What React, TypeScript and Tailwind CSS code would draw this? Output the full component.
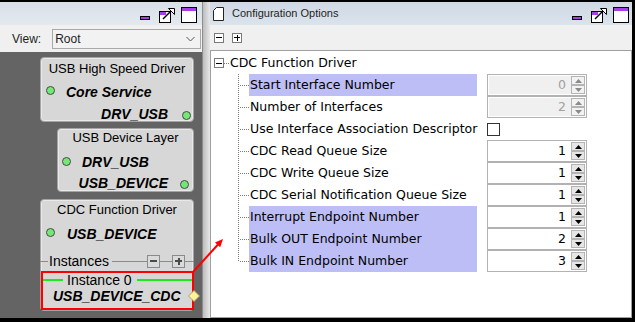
import React from 'react';

const SANS = "font-['Liberation_Sans',Arial,sans-serif]";
const TREE = "font-['DejaVu_Sans',Verdana,sans-serif]";

const WindowButtons = () => (
  <svg width="58" height="17" viewBox="0 0 58 17">
    <rect x="0.5" y="9.5" width="9" height="3" fill="#a53ee6" stroke="#000" />
    <g transform="translate(19,0)">
      <rect x="0.5" y="4.5" width="11" height="11" fill="#fff" stroke="#000" />
      <rect x="1" y="5" width="6" height="3" fill="#a53ee6" />
      <path d="M4 12 L12 4" stroke="#000" strokeWidth="1.5" />
      <path d="M9.5 1.5 L15.5 1.5 L15.5 7.5 Z" fill="#fff" stroke="#000" />
    </g>
    <g transform="translate(41,0)">
      <rect x="0.5" y="0.5" width="15" height="15" fill="#fff" stroke="#000" />
      <rect x="1" y="1" width="14" height="3" fill="#a53ee6" />
    </g>
  </svg>
);

const Dot = () => (
  <span className="inline-block h-[9px] w-[9px] shrink-0 rounded-full border border-[#4a4a4a] bg-[#74e874]" />
);

const NodeLabel = ({ children }: { children: React.ReactNode }) => (
  <span className={`${SANS} text-[14px] font-bold italic leading-none text-black`}>{children}</span>
);

const nodeBox = 'flex flex-col rounded-[4px] border border-[#a4a4a4] bg-[#d7d7d7] shadow-[inset_0_0_0_1px_#e9e9e9]';

const SmallBtn = ({ plus }: { plus?: boolean }) => (
  <span className="relative flex h-[13px] w-[13px] shrink-0 items-center justify-center border border-[#8a8a8a] bg-[#dadada]">
    <span className="h-[2px] w-[7px] bg-[#4a4a4a]" />
    {plus && <span className="absolute h-[7px] w-[2px] bg-[#4a4a4a]" />}
  </span>
);

const ToolBtn = ({ plus }: { plus?: boolean }) => (
  <span className="relative flex h-[10px] w-[10px] shrink-0 items-center justify-center border border-[#7a7a7a] bg-white">
    <span className="h-[1px] w-[6px] bg-black" />
    {plus && <span className="absolute h-[6px] w-[1px] bg-black" />}
  </span>
);

const Canvas = () => (
  <div className="relative flex flex-1 flex-col bg-[#646464]">
    {/* USB High Speed Driver */}
    <div className={`${nodeBox} ml-[40px] mt-[5px] h-[65px] w-[154px]`}>
      <div className={`${SANS} flex h-[21px] shrink-0 items-center justify-center text-[13px] text-black`}>USB High Speed Driver</div>
      <div className="flex h-[23px] shrink-0 items-center pl-[5px]">
        <Dot />
        <span className="ml-[11px]"><NodeLabel>Core Service</NodeLabel></span>
      </div>
      <div className="flex h-[24px] shrink-0 items-center justify-end pr-[2px]">
        <NodeLabel>DRV_USB</NodeLabel>
        <span className="ml-[14px]"><Dot /></span>
      </div>
    </div>

    {/* USB Device Layer */}
    <div className={`${nodeBox} ml-[57px] mt-[6px] h-[64px] w-[137px]`}>
      <div className={`${SANS} flex h-[18px] items-center justify-center text-[13px] text-black`}>USB Device Layer</div>
      <div className="flex h-[28px] items-center pl-[4px]">
        <Dot />
        <span className="ml-[11px]"><NodeLabel>DRV_USB</NodeLabel></span>
      </div>
      <div className="flex h-[16px] items-center justify-end pr-[4px]">
        <NodeLabel>USB_DEVICE</NodeLabel>
        <span className="ml-[12px]"><Dot /></span>
      </div>
    </div>

    {/* CDC Function Driver */}
    <div className={`${nodeBox} ml-[40px] mt-[7px] h-[112px] w-[154px]`}>
      <div className={`${SANS} flex h-[20px] items-center justify-center text-[13px] text-black`}>CDC Function Driver</div>
      <div className="flex h-[26px] items-center pl-[5px]">
        <Dot />
        <span className="ml-[12px]"><NodeLabel>USB_DEVICE</NodeLabel></span>
      </div>
      <div className="-mx-[1px] flex h-[26px] items-center pt-[6px]">
        <span className="h-[1px] w-[8px] bg-[#8a8a8a]" />
        <span className={`${SANS} ml-[1px] text-[14px] leading-none text-black`}>Instances</span>
        <span className="ml-[3px] h-[1px] flex-1 bg-[#8a8a8a]" />
        <SmallBtn />
        <span className="h-[1px] w-[12px] bg-[#8a8a8a]" />
        <SmallBtn plus />
        <span className="h-[1px] w-[9px] bg-[#8a8a8a]" />
      </div>
      <div className="relative flex h-[39px] w-[153px] flex-col border-2 border-[#ff0000]">
        <div className="flex h-[14px] items-center">
          <span className="h-[2px] w-[20px] bg-[#1ee81e]" />
          <span className={`${SANS} ml-[4px] text-[14px] leading-none text-black`}>Instance 0</span>
          <span className="ml-[5px] h-[2px] flex-1 bg-[#1ee81e]" />
        </div>
        <div className="flex h-[18px] items-center pl-[10px]">
          <NodeLabel>USB_DEVICE_CDC</NodeLabel>
        </div>
        <svg className="absolute left-[145px] top-[17px]" width="12" height="12" viewBox="0 0 12 12">
          <polygon points="6,0.5 11.5,6 6,11.5 0.5,6" fill="#fff39a" stroke="#a8a070" />
        </svg>
      </div>
    </div>
  </div>
);

const LeftPanel = () => (
  <div className="flex w-[202px] shrink-0 flex-col">
    <div className="flex h-[23px] items-start justify-end bg-linear-to-b from-[#d8e0e9] to-[#e4e9ef] pr-[4px] pt-[5px]">
      <WindowButtons />
    </div>
    <div className={`${SANS} flex h-[27px] items-center bg-[#f0f0f0] pl-[12px] text-[12px] text-[#1e1e1e]`}>
      <span>View:</span>
      <div className="ml-[11px] flex h-[20px] w-[149px] items-center justify-between border border-[#a9a9a9] bg-[#f2f2f2] pl-[2px] pr-[5px]">
        <span>Root</span>
        <svg width="9" height="6" viewBox="0 0 9 6">
          <path d="M0.5 1 L4.5 5 L8.5 1" fill="none" stroke="#555" />
        </svg>
      </div>
    </div>
    <Canvas />
  </div>
);

type Row = { label: string; hi?: boolean; value?: string; disabled?: boolean; check?: boolean };

const rows: Row[] = [
  { label: 'Start Interface Number', hi: true, value: '0', disabled: true },
  { label: 'Number of Interfaces', value: '2', disabled: true },
  { label: 'Use Interface Association Descriptor', check: true },
  { label: 'CDC Read Queue Size', value: '1' },
  { label: 'CDC Write Queue Size', value: '1' },
  { label: 'CDC Serial Notification Queue Size', value: '1' },
  { label: 'Interrupt Endpoint Number', hi: true, value: '1' },
  { label: 'Bulk OUT Endpoint Number', hi: true, value: '2' },
  { label: 'Bulk IN Endpoint Number', hi: true, value: '3' },
];

const Arrow = ({ up, disabled }: { up?: boolean; disabled?: boolean }) => (
  <span className={`flex h-[9px] w-full items-center justify-center border border-[#b4b4b4] ${disabled ? 'bg-[#f2f2f2]' : 'bg-[#e6e6e6]'}`}>
    <svg width="7" height="4" viewBox="0 0 7 4">
      <path d={up ? 'M0 4 L3.5 0 L7 4 Z' : 'M0 0 L3.5 4 L7 0 Z'} fill={disabled ? '#8a8a8a' : '#000'} />
    </svg>
  </span>
);

const Spinner = ({ value, disabled }: { value: string; disabled?: boolean }) => (
  <div
    className={`ml-[10px] flex h-[22px] w-[100px] shrink-0 items-center border border-[#b2b2b2] ${
      disabled ? 'bg-[#f0f0f0] shadow-[inset_0_0_0_1px_#fff]' : 'bg-white'
    }`}
  >
    <span className={`flex-1 pr-[5px] text-right ${disabled ? 'text-[#a0a0a0]' : 'text-black'}`}>{value}</span>
    <div className="mr-[1px] flex w-[14px] flex-col">
      <Arrow up disabled={disabled} />
      <Arrow disabled={disabled} />
    </div>
  </div>
);

const Connector = ({ last }: { last?: boolean }) => (
  <svg width="11" height="22" className="shrink-0">
    <line x1="0.5" y1="0" x2="0.5" y2={last ? 11 : 22} stroke="#7a7a7a" strokeDasharray="1 1" />
    <line x1="2" y1="11.5" x2="11" y2="11.5" stroke="#7a7a7a" strokeDasharray="1 1" />
  </svg>
);

const RightPanel = () => (
  <div className="flex min-w-0 flex-1 flex-col">
    <div className="flex h-[23px] items-center bg-linear-to-b from-[#cfd9e4] to-[#dbe3ec] pl-[3px] pr-[2px]">
      <svg width="11" height="14" viewBox="0 0 11 14">
        <path d="M3.5 0.5 H10.5 V13.5 H0.5 V3.5 Z" fill="#fff" stroke="#222" />
      </svg>
      <span className={`${SANS} ml-[8px] text-[11px] text-[#1e1e1e]`}>Configuration Options</span>
      <span className="ml-auto self-start pt-[5px]">
        <WindowButtons />
      </span>
    </div>
    <div className="flex h-[25px] items-center gap-[8px] bg-[#f0f0f0] pl-[4px]">
      <ToolBtn />
      <ToolBtn plus />
    </div>
    <div className={`${TREE} flex flex-1 flex-col border border-[#a0a0a0] bg-white pt-[1px] text-[12.5px] text-black`}>
      <div className="flex h-[22px] items-center pl-[3px]">
        <ToolBtn />
        <svg width="5" height="22" className="shrink-0">
          <line x1="0" y1="11.5" x2="5" y2="11.5" stroke="#7a7a7a" strokeDasharray="1 1" />
        </svg>
        <span className="ml-[1px]">CDC Function Driver</span>
      </div>
      {rows.map((r, i) => (
        <div key={r.label} className="flex h-[22px] items-center pl-[27px]">
          <Connector last={i === rows.length - 1} />
          <span className={`flex h-[22px] w-[228px] shrink-0 items-center whitespace-nowrap pl-[1px] ${r.hi ? 'bg-[#bebef6]' : ''}`}>
            {r.label}
          </span>
          {r.check ? (
            <span className="ml-[10px] h-[13px] w-[13px] border border-[#333] bg-white" />
          ) : (
            <Spinner value={r.value ?? ''} disabled={r.disabled} />
          )}
        </div>
      ))}
    </div>
  </div>
);

export default function App() {
  return (
    <div className="relative flex h-[322px] w-[635px] flex-col bg-black pb-[4px] pr-[3px] pt-[2px]">
      <div className="flex min-h-0 flex-1">
        <LeftPanel />
        <div className="w-[8px] shrink-0 border-l border-[#8c8c8c] bg-linear-to-r from-[#bdbdbd] to-[#e8e8e8]" />
        <RightPanel />
      </div>
      <svg className="pointer-events-none absolute left-0 top-0" width="635" height="322">
        <line x1="193" y1="272" x2="218" y2="244.5" stroke="#ff0000" strokeWidth="2" />
        <polygon points="223,239 220.2,247.3 215,242.5" fill="#ff0000" />
      </svg>
    </div>
  );
}
